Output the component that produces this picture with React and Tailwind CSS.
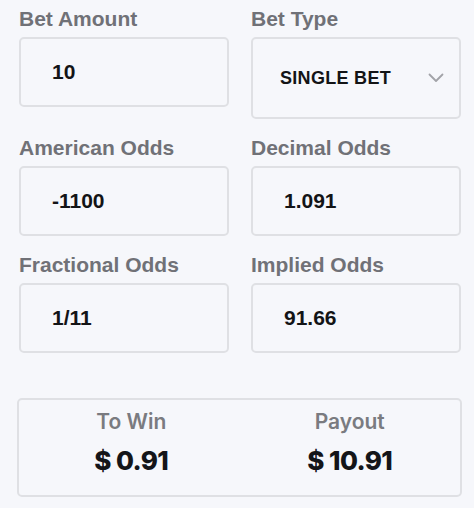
import React from "react";

const sans = { fontFamily: '"Liberation Sans", Arial, sans-serif' };
const inter = { fontFamily: 'Inter, "Liberation Sans", sans-serif' };

function Field({ label, value }) {
  return (
    <div className="flex flex-col">
      <div className="text-[21px] leading-[24px] font-bold text-[#707177] mb-[6px]" style={sans}>
        {label}
      </div>
      <div className="h-[70px] border-2 border-[#dfe0e4] rounded-[5px] flex items-center pl-[31px] text-[21px] font-bold text-[#131416]" style={sans}>
        {value}
      </div>
    </div>
  );
}

export default function App() {
  return (
    <div className="min-h-[508px] w-[474px] bg-[#f6f7fb] pl-[19px] pt-[7px]">
      <div className="grid grid-cols-[210px_210px] gap-x-[22px] gap-y-[17px]">
        <Field label="Bet Amount" value="10" />
        <div className="flex flex-col">
          <div className="text-[21px] leading-[24px] font-bold text-[#707177] mb-[6px]" style={sans}>
            Bet Type
          </div>
          <div className="h-[82px] border-2 border-[#dfe0e4] rounded-[5px] flex items-center justify-between pl-[27px] pr-[15px] text-[18px] tracking-[0.3px] font-bold text-[#131416]" style={sans}>
            <span>SINGLE BET</span>
            <svg width="16" height="10" viewBox="0 0 16 10" fill="none">
              <polyline points="1.5,1.5 8,8 14.5,1.5" stroke="#a2a3a8" strokeWidth="1.8" strokeLinecap="round" strokeLinejoin="round" />
            </svg>
          </div>
        </div>
        <Field label="American Odds" value="-1100" />
        <Field label="Decimal Odds" value="1.091" />
        <Field label="Fractional Odds" value="1/11" />
        <Field label="Implied Odds" value="91.66" />
      </div>
      <div className="mt-[45px] ml-[-2px] w-[445px] h-[99px] border-2 border-[#dfe0e4] rounded-[5px] grid grid-cols-2 pt-[10px]" style={inter}>
        <div className="flex flex-col items-center pl-[4px]">
          <div className="text-[21px] leading-[24px] font-semibold text-[#7a7b80]">To Win</div>
          <div className="mt-[11px] text-[26px] leading-[32px] font-extrabold tracking-[-0.6px] text-[#141519]">$ 0.91</div>
        </div>
        <div className="flex flex-col items-center">
          <div className="text-[21px] leading-[24px] font-semibold text-[#7a7b80]">Payout</div>
          <div className="mt-[11px] text-[26px] leading-[32px] font-extrabold tracking-[-0.6px] text-[#141519]">$ 10.91</div>
        </div>
      </div>
    </div>
  );
}
